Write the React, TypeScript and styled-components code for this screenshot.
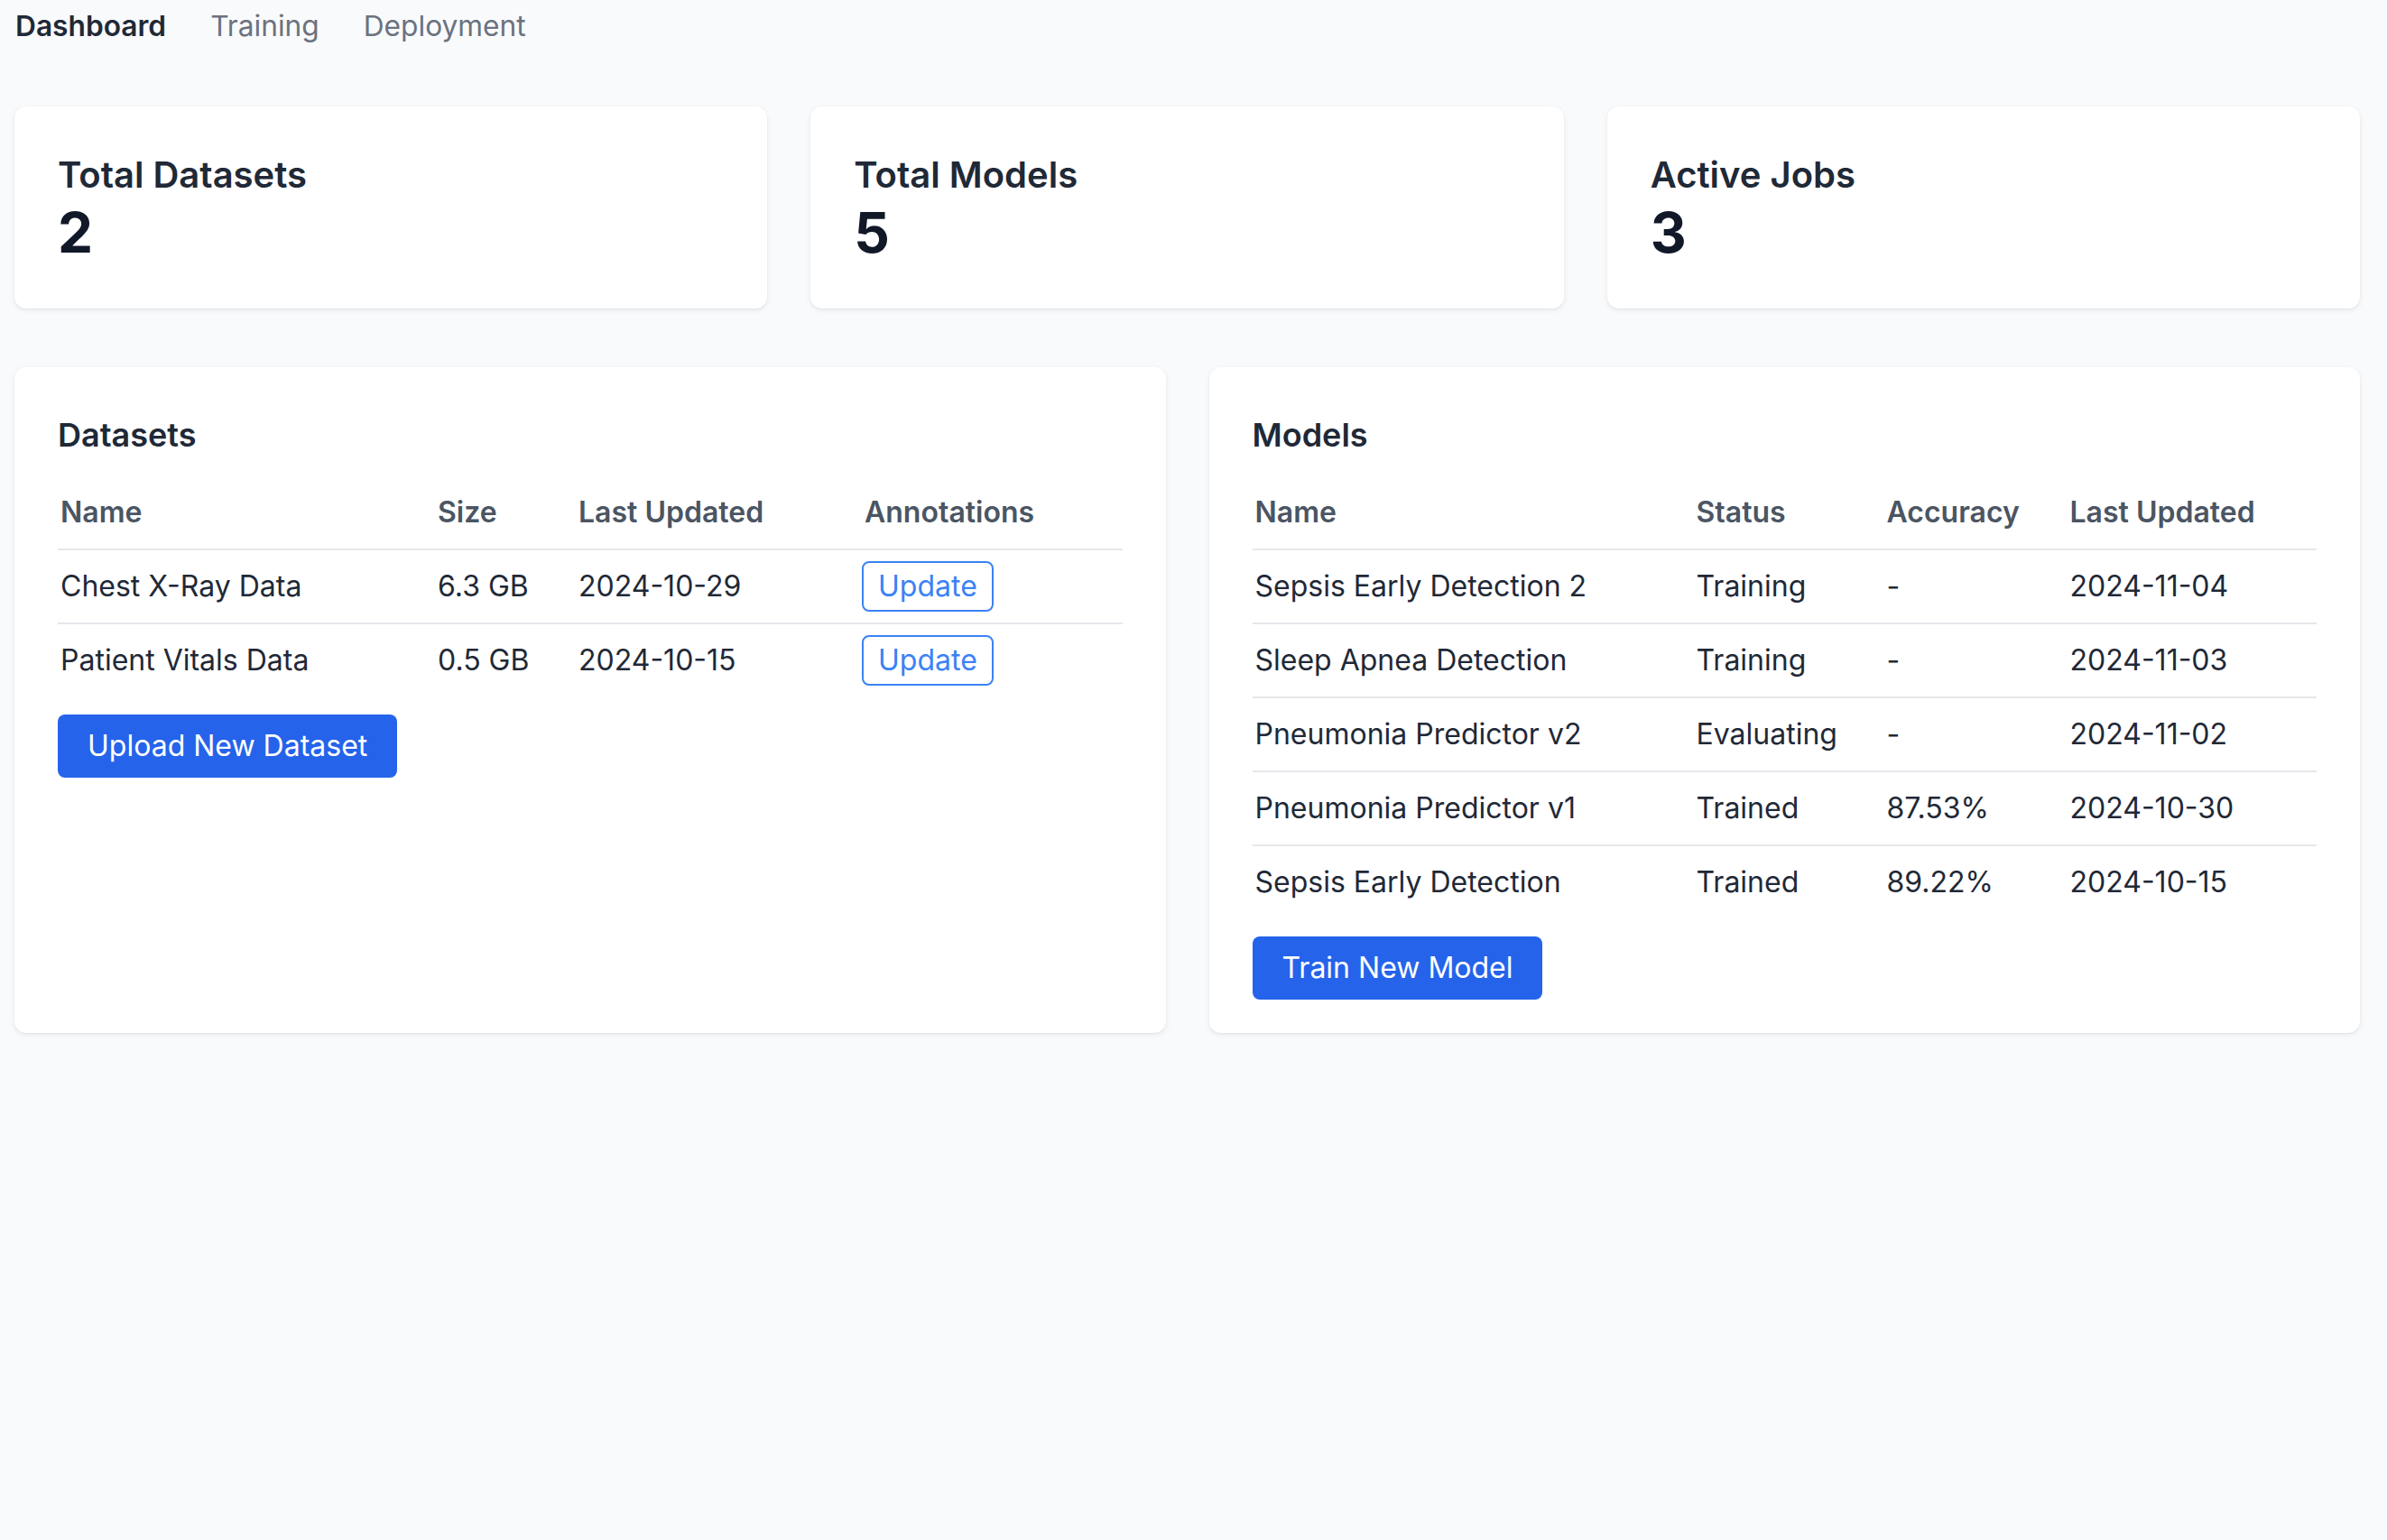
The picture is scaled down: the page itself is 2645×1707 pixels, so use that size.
import React from "react";
import styled, { createGlobalStyle } from "styled-components";

const GlobalStyle = createGlobalStyle`
  html, body {
    margin: 0;
    padding: 0;
    background: #f9fafb;
  }
  body {
    font-family: Inter, "Noto Sans", "Liberation Sans", sans-serif;
    color: #1f2937;
  }
  * { box-sizing: border-box; }
`;

const Page = styled.div`
  min-height: 1707px;
  padding: 5px 30px 0 16px;
  display: flex;
  flex-direction: column;
`;

const Nav = styled.nav`
  display: flex;
  gap: 49px;
  padding-left: 1px;
  height: 48px;
  align-items: center;
`;

const NavItem = styled.a<{ $active?: boolean }>`
  font-size: 31.7px;
  line-height: 48px;
  font-weight: ${(p) => (p.$active ? 600 : 400)};
  color: ${(p) => (p.$active ? "#1f2937" : "#6b7280")};
  text-decoration: none;
  cursor: pointer;
`;

const StatsRow = styled.section`
  margin-top: 65px;
  display: grid;
  grid-template-columns: repeat(3, 1fr);
  gap: 48px;
`;

const Card = styled.div`
  background: #ffffff;
  border-radius: 13px;
  box-shadow: 0 2px 6px rgba(15, 23, 42, 0.07), 0 1px 2px rgba(15, 23, 42, 0.05);
`;

const StatCard = styled(Card)`
  padding: 48px;
`;

const StatTitle = styled.h3`
  margin: 0;
  font-size: 40px;
  line-height: 56px;
  font-weight: 600;
  color: #1f2937;
`;

const StatValue = styled.div`
  font-size: 62px;
  line-height: 72px;
  font-weight: 700;
  color: #111827;
`;

const PanelsRow = styled.section`
  margin-top: 65px;
  display: grid;
  grid-template-columns: 1fr 1fr;
  gap: 48px;
  align-items: stretch;
`;

const Panel = styled(Card)`
  padding: 45px 48px 37px;
`;

const PanelTitle = styled.h2`
  margin: 0 0 16px;
  font-size: 36px;
  line-height: 60px;
  font-weight: 600;
  color: #1f2937;
`;

const Table = styled.table`
  width: 100%;
  border-collapse: collapse;
  table-layout: fixed;
`;

const Th = styled.th<{ $w?: number }>`
  ${(p) => (p.$w ? `width: ${p.$w}px;` : "")}
  text-align: left;
  font-size: 32px;
  line-height: 54px;
  font-weight: 600;
  color: #4b5563;
  padding: 13px 0 13px 3px;
  border-bottom: 2px solid #e5e7eb;
  white-space: nowrap;
`;

const Tr = styled.tr`
  & + & td {
    border-top: 2px solid #e5e7eb;
  }
`;

const Td = styled.td`
  font-size: 32px;
  line-height: 54px;
  color: #1f2937;
  padding: 13px 0 13px 3px;
  white-space: nowrap;
  vertical-align: top;
`;

const OutlineButton = styled.button`
  display: inline-block;
  vertical-align: top;
  margin-left: -3px;
  height: 56px;
  margin-top: -1px;
  margin-bottom: -1px;
  padding: 0 16px;
  border: 2px solid #3b82f6;
  border-radius: 8px;
  background: #ffffff;
  color: #3b82f6;
  font-family: inherit;
  font-size: 32px;
  line-height: 52px;
  cursor: pointer;
`;

const PrimaryButton = styled.button`
  margin-top: 20px;
  align-self: flex-start;
  display: inline-block;
  height: 70px;
  padding: 0 33px;
  border: none;
  border-radius: 8px;
  background: #2563eb;
  color: #ffffff;
  font-family: inherit;
  font-size: 32px;
  line-height: 70px;
  cursor: pointer;
`;

const PanelBody = styled.div`
  display: flex;
  flex-direction: column;
`;

const stats = [
  { title: "Total Datasets", value: 2 },
  { title: "Total Models", value: 5 },
  { title: "Active Jobs", value: 3 },
];

const datasets = [
  { name: "Chest X-Ray Data", size: "6.3 GB", updated: "2024-10-29" },
  { name: "Patient Vitals Data", size: "0.5 GB", updated: "2024-10-15" },
];

const models = [
  { name: "Sepsis Early Detection 2", status: "Training", acc: "-", updated: "2024-11-04" },
  { name: "Sleep Apnea Detection", status: "Training", acc: "-", updated: "2024-11-03" },
  { name: "Pneumonia Predictor v2", status: "Evaluating", acc: "-", updated: "2024-11-02" },
  { name: "Pneumonia Predictor v1", status: "Trained", acc: "87.53%", updated: "2024-10-30" },
  { name: "Sepsis Early Detection", status: "Trained", acc: "89.22%", updated: "2024-10-15" },
];

export default function App() {
  return (
    <>
      <GlobalStyle />
      <Page>
        <Nav>
          <NavItem $active>Dashboard</NavItem>
          <NavItem>Training</NavItem>
          <NavItem>Deployment</NavItem>
        </Nav>

        <StatsRow>
          {stats.map((s) => (
            <StatCard key={s.title}>
              <StatTitle>{s.title}</StatTitle>
              <StatValue>{s.value}</StatValue>
            </StatCard>
          ))}
        </StatsRow>

        <PanelsRow>
          <Panel>
            <PanelBody>
              <PanelTitle>Datasets</PanelTitle>
              <Table>
                <thead>
                  <tr>
                    <Th $w={418}>Name</Th>
                    <Th $w={156}>Size</Th>
                    <Th $w={317}>Last Updated</Th>
                    <Th>Annotations</Th>
                  </tr>
                </thead>
                <tbody>
                  {datasets.map((d) => (
                    <Tr key={d.name}>
                      <Td>{d.name}</Td>
                      <Td>{d.size}</Td>
                      <Td>{d.updated}</Td>
                      <Td>
                        <OutlineButton>Update</OutlineButton>
                      </Td>
                    </Tr>
                  ))}
                </tbody>
              </Table>
              <PrimaryButton>Upload New Dataset</PrimaryButton>
            </PanelBody>
          </Panel>

          <Panel>
            <PanelBody>
              <PanelTitle>Models</PanelTitle>
              <Table>
                <thead>
                  <tr>
                    <Th $w={489}>Name</Th>
                    <Th $w={211}>Status</Th>
                    <Th $w={203}>Accuracy</Th>
                    <Th>Last Updated</Th>
                  </tr>
                </thead>
                <tbody>
                  {models.map((m) => (
                    <Tr key={m.name}>
                      <Td>{m.name}</Td>
                      <Td>{m.status}</Td>
                      <Td>{m.acc}</Td>
                      <Td>{m.updated}</Td>
                    </Tr>
                  ))}
                </tbody>
              </Table>
              <PrimaryButton>Train New Model</PrimaryButton>
            </PanelBody>
          </Panel>
        </PanelsRow>
      </Page>
    </>
  );
}
